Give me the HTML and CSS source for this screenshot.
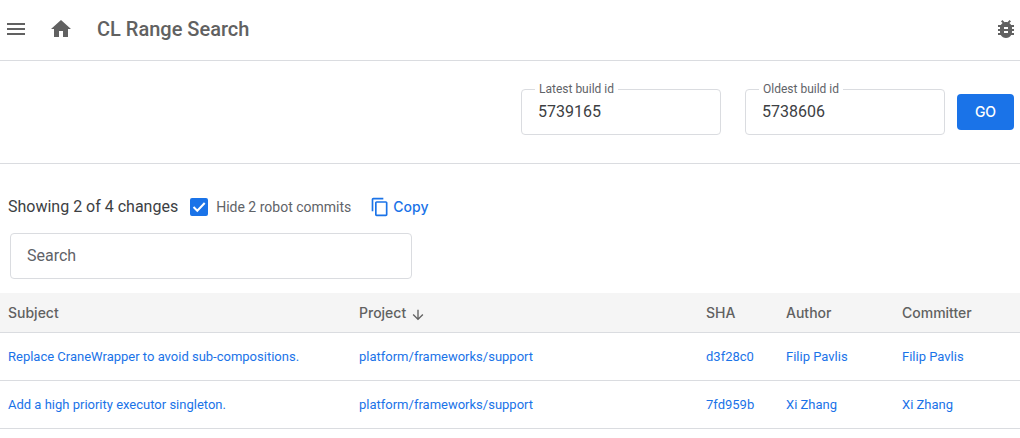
FILE: index.html
```html
<!DOCTYPE html>
<html lang="en">
<head>
<meta charset="utf-8">
<meta name="viewport" content="width=device-width, initial-scale=1">
<title>CL Range Search</title>
<link rel="stylesheet" href="styles.css">
</head>
<body>
<header class="topbar">
  <button class="icon-button" type="button" aria-label="Menu">
    <svg class="icon" viewBox="0 0 24 24"><path d="M3 18h18v-2H3v2zm0-5h18v-2H3v2zm0-7v2h18V6H3z"/></svg>
  </button>
  <a class="icon-button home" href="#" aria-label="Home">
    <svg class="icon" viewBox="0 0 24 24"><path d="M10 20v-6h4v6h5v-8h3L12 3 2 12h3v8z"/></svg>
  </a>
  <h1 class="title">CL Range Search</h1>
  <button class="icon-button bug" type="button" aria-label="Report a bug">
    <svg class="icon" viewBox="0 0 24 24"><path d="M20 8h-2.81c-.45-.78-1.07-1.45-1.82-1.96L17 4.41 15.59 3l-2.17 2.17C12.96 5.06 12.49 5 12 5s-.96.06-1.41.17L8.41 3 7 4.41l1.62 1.63C7.88 6.55 7.26 7.22 6.81 8H4v2h2.09c-.05.33-.09.66-.09 1v1H4v2h2v1c0 .34.04.67.09 1H4v2h2.81c1.04 1.79 2.97 3 5.19 3s4.15-1.21 5.19-3H20v-2h-2.09c.05-.33.09-.66.09-1v-1h2v-2h-2v-1c0-.34-.04-.67-.09-1H20V8zm-6 8h-4v-2h4v2zm0-4h-4v-2h4v2z"/></svg>
  </button>
</header>
<main>
  <form class="range">
    <fieldset class="field">
      <legend class="field-legend"><label for="latest">Latest build id</label></legend>
      <input class="field-input" id="latest" type="text" value="5739165">
    </fieldset>
    <fieldset class="field">
      <legend class="field-legend"><label for="oldest">Oldest build id</label></legend>
      <input class="field-input" id="oldest" type="text" value="5738606">
    </fieldset>
    <button class="go" type="button">GO</button>
  </form>
  <section class="toolbar">
    <span class="count">Showing 2 of 4 changes</span>
    <span class="check-box">
      <input class="check" id="robots" type="checkbox" checked>
      <svg class="check-mark" viewBox="0 0 18 18"><path d="M3.500 9l3.800 3.800L14.700 5"/></svg>
    </span>
    <label class="check-label" for="robots">Hide 2 robot commits</label>
    <button class="copy" type="button">
      <svg class="copy-icon" viewBox="0 0 24 24"><path d="M16 1H4c-1.100 0-2 .9-2 2v14h2V3h12V1zm3 4H8c-1.100 0-2 .9-2 2v14c0 1.100.9 2 2 2h11c1.100 0 2-.9 2-2V7c0-1.100-.9-2-2-2zm0 16H8V7h11v14z"/></svg>
      Copy
    </button>
  </section>
  <div class="search-row">
    <input class="search" type="text" placeholder="Search" aria-label="Search">
  </div>
  <table class="changes">
    <colgroup><col class="col-subject"><col class="col-project"><col class="col-sha"><col class="col-author"><col class="col-committer"></colgroup>
    <thead>
      <tr>
        <th scope="col">Subject</th>
        <th scope="col"><span class="sorted">Project <svg class="sort-icon" viewBox="0 0 24 24"><path d="M20 12l-1.410-1.410L13 16.170V4h-2v12.170l-5.580-5.590L4 12l8 8 8-8z"/></svg></span></th>
        <th scope="col">SHA</th>
        <th scope="col">Author</th>
        <th scope="col">Committer</th>
      </tr>
    </thead>
    <tbody>
      <tr>
        <td><a href="#">Replace CraneWrapper to avoid sub-compositions.</a></td>
        <td><a href="#">platform/frameworks/support</a></td>
        <td><a href="#">d3f28c0</a></td>
        <td><a href="#">Filip Pavlis</a></td>
        <td><a href="#">Filip Pavlis</a></td>
      </tr>
      <tr>
        <td><a href="#">Add a high priority executor singleton.</a></td>
        <td><a href="#">platform/frameworks/support</a></td>
        <td><a href="#">7fd959b</a></td>
        <td><a href="#">Xi Zhang</a></td>
        <td><a href="#">Xi Zhang</a></td>
      </tr>
    </tbody>
  </table>
</main>
</body>
</html>
```
FILE: styles.css
```css
* {
  box-sizing: border-box;
}

body {
  margin: 0;
  background: #fff;
  color: #3c4043;
  font: 400 14px/20px Roboto, sans-serif;
}

button,
input {
  font: inherit;
  color: inherit;
}

button {
  margin: 0;
  padding: 0;
  border: 0;
  background: none;
  cursor: pointer;
}

a {
  color: #1a73e8;
  text-decoration: none;
}

.topbar {
  display: flex;
  align-items: center;
  padding: 17px 2px 19px 4px;
  border-bottom: 1px solid #dadce0;
  color: #616161;
}

.icon-button {
  display: flex;
  color: #616161;
}

.icon {
  width: 24px;
  height: 24px;
  fill: currentColor;
}

.home {
  margin-left: 21px;
}

.title {
  margin: 0 0 0 24px;
  font-size: 20px;
  font-weight: 500;
  line-height: 24px;
}

.bug {
  margin-left: auto;
}

.range {
  display: flex;
  justify-content: flex-end;
  align-items: flex-end;
  padding: 21px 6px 28px;
  border-bottom: 1px solid #dadce0;
}

.field {
  width: 200px;
  min-width: 0;
  margin: 0 24px 0 0;
  padding: 0 12px;
  border: 1px solid #dadce0;
  border-radius: 4px;
}

.field + .field {
  margin-right: 12px;
}

.field-legend {
  margin-left: 1px;
  padding: 0 4px;
  color: #5f6368;
  font-size: 12px;
  line-height: 14px;
}

.field-input {
  display: block;
  width: 100%;
  padding: 6px 4px 12px;
  border: 0;
  outline: 0;
  background: none;
  font-size: 16px;
  line-height: 20px;
}

.go {
  min-width: 57px;
  margin-bottom: 5px;
  padding: 8px 16px;
  border-radius: 4px;
  background: #1a73e8;
  color: #fff;
  font: 500 14px/20px Inter, sans-serif;
}

.toolbar {
  display: flex;
  align-items: center;
  padding: 33px 8px 16px;
}

.count {
  font-size: 16px;
}

.check-box {
  display: grid;
  flex: none;
  width: 18px;
  height: 18px;
  margin: 0 8px 0 12px;
}

.check,
.check-mark {
  grid-area: 1 / 1;
  width: 18px;
  height: 18px;
  margin: 0;
}

.check {
  appearance: none;
  border: 2px solid #5f6368;
  border-radius: 2px;
}

.check:checked {
  border-color: #1a73e8;
  background: #1a73e8;
}

.check-mark {
  fill: none;
  stroke: #fff;
  stroke-width: 2;
  pointer-events: none;
}

.check-label {
  color: #5f6368;
}

.copy {
  display: flex;
  align-items: center;
  gap: 3px;
  margin-left: 19px;
  color: #1a73e8;
  font: 500 14px/20px Inter, sans-serif;
}

.copy-icon {
  width: 20px;
  height: 20px;
  fill: currentColor;
}

.search-row {
  padding: 0 10px 14px;
}

.search {
  display: block;
  width: 402px;
  max-width: 100%;
  padding: 12px 16px;
  border: 1px solid #dadce0;
  border-radius: 4px;
  font-size: 16px;
  line-height: 20px;
}

.search::placeholder {
  color: #5f6368;
  opacity: 1;
}

.changes {
  width: 100%;
  border-collapse: separate;
  border-spacing: 0;
  table-layout: fixed;
  font-size: 13px;
}

.col-subject {
  width: 351px;
}

.col-sha {
  width: 80px;
}

.col-author {
  width: 116px;
}

.col-committer {
  width: 126px;
}

.changes th {
  height: 40px;
  padding: 0 8px;
  border-bottom: 1px solid #dadce0;
  background: #f5f5f5;
  color: #616161;
  font: 500 14px/20px Inter, sans-serif;
  text-align: left;
}

.changes td {
  height: 48px;
  padding: 0 8px;
  border-bottom: 1px solid #dadce0;
}

.sorted {
  display: flex;
  align-items: flex-end;
  gap: 4px;
}

.sort-icon {
  width: 16px;
  height: 16px;
  fill: currentColor;
}
```
